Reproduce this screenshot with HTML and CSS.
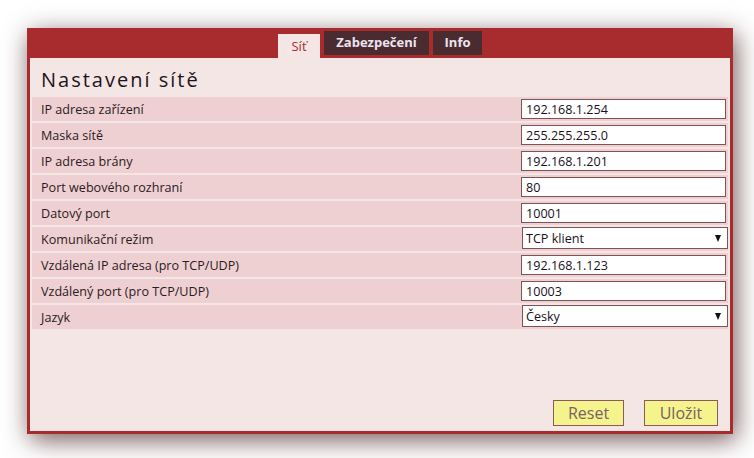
FILE: index.html
```html
<!DOCTYPE html>
<html lang="cs">
<head>
<meta charset="utf-8">
<title>Nastavení sítě</title>
<link rel="stylesheet" href="styles.css">
</head>
<body>
<div class="panel">
  <div class="tabbar">
    <div class="tab active">Síť</div>
    <div class="tab">Zabezpečení</div>
    <div class="tab">Info</div>
  </div>
  <div class="content">
    <h1 class="title">Nastavení sítě</h1>
    <div class="rows">
      <div class="row"><span class="label">IP adresa zařízení</span><span class="ctrl"><input class="field" type="text" value="192.168.1.254"></span></div>
      <div class="row"><span class="label">Maska sítě</span><span class="ctrl"><input class="field" type="text" value="255.255.255.0"></span></div>
      <div class="row"><span class="label">IP adresa brány</span><span class="ctrl"><input class="field" type="text" value="192.168.1.201"></span></div>
      <div class="row"><span class="label">Port webového rozhraní</span><span class="ctrl"><input class="field" type="text" value="80"></span></div>
      <div class="row"><span class="label">Datový port</span><span class="ctrl"><input class="field" type="text" value="10001"></span></div>
      <div class="row"><span class="label">Komunikační režim</span><span class="ctrl"><span class="selwrap"><select class="sel"><option>TCP klient</option><option>TCP server</option><option>UDP</option></select></span></span></div>
      <div class="row"><span class="label">Vzdálená IP adresa (pro TCP/UDP)</span><span class="ctrl"><input class="field" type="text" value="192.168.1.123"></span></div>
      <div class="row"><span class="label">Vzdálený port (pro TCP/UDP)</span><span class="ctrl"><input class="field" type="text" value="10003"></span></div>
      <div class="row"><span class="label">Jazyk</span><span class="ctrl"><span class="selwrap"><select class="sel"><option>Česky</option><option>English</option></select></span></span></div>
    </div>
    <div class="actions">
      <button class="btn btn-reset" type="button">Reset</button>
      <button class="btn btn-save" type="button">Uložit</button>
    </div>
  </div>
</div>
</body>
</html>
```
FILE: styles.css
```css
html, body {
  margin: 0;
  padding: 0;
  background: #ffffff;
}
body {
  font-family: "Open Sans", "Noto Sans", sans-serif;
  font-size: 12.6px;
  color: #2a1a22;
  padding: 28px 0 0 27px;
  height: 458px;
  box-sizing: border-box;
}
.panel {
  width: 700px;
  height: 403px;
  border: 3px solid #a82c2e;
  border-top: 0;
  background: #a82c2e;
  box-shadow: 3px 6px 24px rgba(60, 20, 20, 0.7);
  display: flex;
  flex-direction: column;
}
.tabbar {
  height: 30px;
  flex: none;
  display: flex;
  align-items: flex-start;
  gap: 4px;
  padding-left: 248px;
  padding-top: 3px;
  box-sizing: border-box;
}
.tab {
  height: 24px;
  line-height: 23px;
  box-sizing: border-box;
  background: #4a2b30;
  color: #ece4f0;
  font-weight: bold;
  font-size: 13px;
  text-align: center;
}
.tab:nth-child(2) { width: 105px; }
.tab:nth-child(3) { width: 49px; }
.tab.active {
  width: 42px;
  margin-top: 3px;
  background: #f5e6e6;
  color: #a82c2e;
  font-weight: normal;
  line-height: 25px;
}
.content {
  flex: 1;
  background: #f5e6e6;
  padding: 0 2px;
  display: flex;
  flex-direction: column;
}
.title {
  margin: 0;
  height: 39px;
  box-sizing: border-box;
  padding: 9px 0 0 9px;
  font-size: 20px;
  line-height: 26px;
  font-weight: normal;
  letter-spacing: 2px;
  color: #1c1418;
}
.rows {
  display: flex;
  flex-direction: column;
  gap: 2px;
}
.row {
  height: 24px;
  background: #efd0d2;
  display: flex;
  align-items: center;
  padding-left: 9px;
}
.label {
  flex: 1;
  line-height: 25px;
  white-space: nowrap;
}
.ctrl {
  width: 207px;
  flex: none;
  display: flex;
  align-items: center;
}
.field {
  width: 205px;
  height: 20px;
  box-sizing: border-box;
  border: 1px solid #7d5357;
  background: #ffffff;
  padding: 0 4px;
  margin: 0;
  font-family: inherit;
  font-size: 12.6px;
  color: #1a1020;
  outline: none;
}
.selwrap {
  position: relative;
  display: block;
  width: 206px;
  height: 22px;
  margin-left: 1px;
  margin-top: -2px;
}
.selwrap::after {
  content: "";
  position: absolute;
  right: 7px;
  top: 8px;
  width: 0;
  height: 0;
  border-left: 3.5px solid transparent;
  border-right: 3.5px solid transparent;
  border-top: 7px solid #111;
  pointer-events: none;
}
.sel {
  appearance: none;
  -webkit-appearance: none;
  width: 206px;
  height: 22px;
  box-sizing: border-box;
  border: 1px solid #7d5357;
  border-radius: 0;
  background: #ffffff;
  padding: 0 3px;
  margin: 0;
  font-family: inherit;
  font-size: 12.6px;
  color: #1a1020;
  outline: none;
}
.actions {
  margin-top: auto;
  display: flex;
  justify-content: flex-end;
  gap: 20px;
  padding: 0 10px 5px 0;
}
.btn {
  height: 26px;
  box-sizing: border-box;
  border: 1px solid #8a5a5e;
  background: #f5f38c;
  color: #7a6065;
  font-family: inherit;
  font-size: 16px;
  line-height: 22px;
  padding: 0;
  margin: 0;
  border-radius: 0;
}
.btn-reset { width: 71px; }
.btn-save { width: 74px; }
```
